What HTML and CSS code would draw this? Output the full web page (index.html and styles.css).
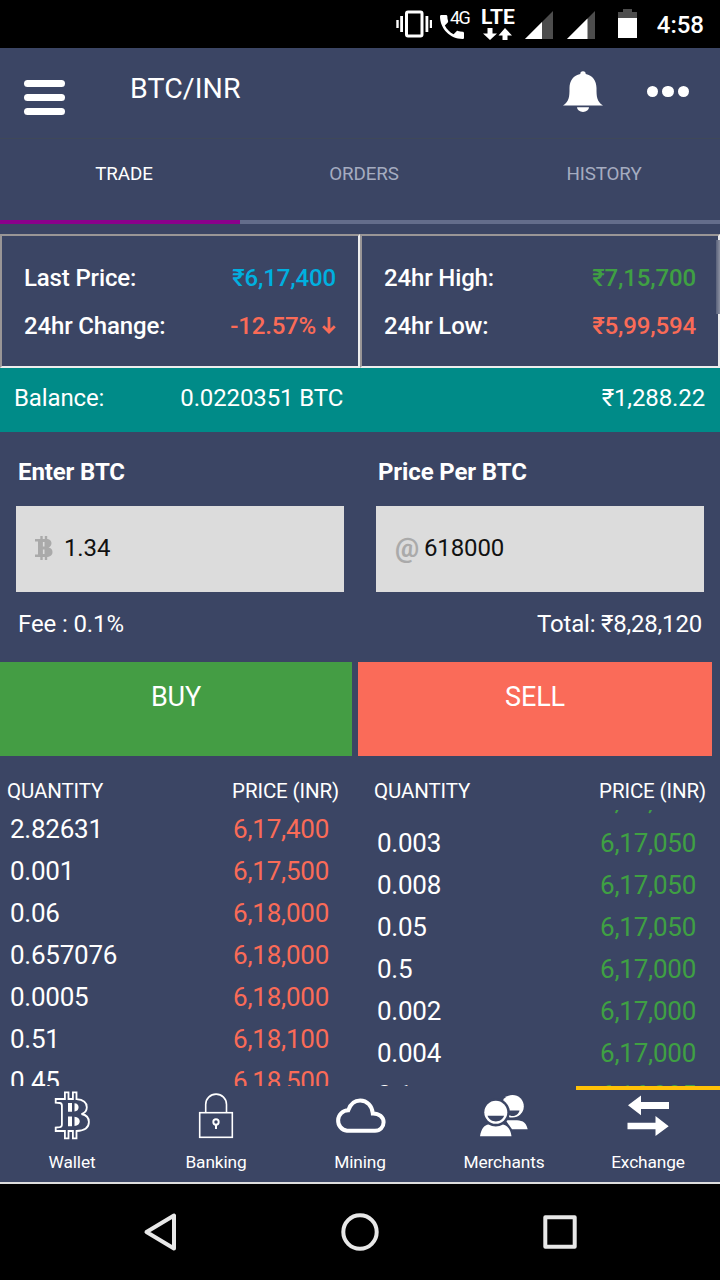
FILE: index.html
```html
<!DOCTYPE html>
<html lang="en">
<head>
    <meta charset="UTF-8">
    <meta name="viewport" content="width=device-width, initial-scale=1.0">
    <title>BTC/INR</title>
    <link rel="stylesheet" href="styles.css">
</head>
<body>
    <!-- Status bar -->
    <div class="status-bar">
        <svg class="vibrate" width="36" height="28" viewBox="0 0 36 28" fill="none" stroke="#fff">
            <rect x="10.5" y="2" width="15.5" height="24" rx="1.5" stroke-width="3"/>
            <path d="M5.6 6v16M30.9 6v16" stroke-width="2.8"/>
            <path d="M1.5 10v8M35 10v8" stroke-width="2.4"/>
        </svg>
        <div class="call">
            <svg width="24" height="24" viewBox="3 3 18 18" fill="#fff">
                <path d="M6.62 10.79c1.44 2.83 3.76 5.14 6.59 6.59l2.2-2.2c.27-.27.67-.36 1.02-.24 1.12.37 2.33.57 3.57.57.55 0 1 .45 1 1V20c0 .55-.45 1-1 1-9.39 0-17-7.61-17-17 0-.55.45-1 1-1h3.5c.55 0 1 .45 1 1 0 1.25.2 2.45.57 3.57.11.35.03.74-.25 1.02l-2.2 2.2z"/>
            </svg>
            <span class="call-type">4G</span>
        </div>
        <div class="lte">
            <span>LTE</span>
            <svg width="29" height="12" viewBox="0 0 29 12" fill="#fff">
                <path d="M4.500 0h5v5.500h4.500L7 12 0 5.500h4.500zM19.500 12h5V7.500h4.500L22 0l-6.500 7.500h4z"/>
            </svg>
        </div>
        <svg class="signal" width="28" height="28" viewBox="0 0 28 28">
            <path d="M0 28L28 0v28z" fill="#4d4d4d"/><path d="M0 28L17 11v17z" fill="#fff"/>
        </svg>
        <svg class="signal2" width="28" height="28" viewBox="0 0 28 28">
            <path d="M0 28L28 0v28z" fill="#4d4d4d"/><path d="M0 28L20.500 7.500V28z" fill="#fff"/>
        </svg>
        <svg class="battery" width="19" height="29" viewBox="0 0 19 29">
            <path d="M0 9V3h5V0h9v3h5v6z" fill="#4d4d4d"/><path d="M0 9h19v20H0z" fill="#fff"/>
        </svg>
        <span class="clock">4:58</span>
    </div>

    <!-- Header -->
    <div class="header">
        <div class="menu"><i></i><i></i><i></i></div>
        <h1>BTC/INR</h1>
        <svg class="bell" width="40" height="42" viewBox="0 0 40 42" fill="#fff">
            <path d="M17.300 2.900a2.700 2.700 0 0 1 5.400 0C29.500 4.100 33.500 9.500 33.500 17c0 9 .3 13.500 6.500 17.400H0C6.200 30.500 6.500 26 6.500 17c0-7.500 4-12.900 10.800-14.100z"/>
            <path d="M14 36.200h12a6 4.800 0 0 1-12 0z"/>
        </svg>
        <div class="more"><i></i><i></i><i></i></div>
    </div>

    <!-- Tabs -->
    <div class="tabs">
        <div class="tab active">TRADE</div>
        <div class="tab">ORDERS</div>
        <div class="tab">HISTORY</div>
    </div>

    <!-- Price stats -->
    <div class="stats">
        <div class="stat-box">
            <div class="stat"><span>Last Price:</span><span class="blue">₹6,17,400</span></div>
            <div class="stat"><span>24hr Change:</span>
                <span class="red change">-12.57%<svg width="14" height="18" viewBox="0 0 14 18" fill="none" stroke="#fa6b57" stroke-width="2.8"><path d="M7 0v15M1.200 9.300L7 15l5.800-5.700"/></svg></span>
            </div>
        </div>
        <div class="stat-box">
            <div class="stat"><span>24hr High:</span><span class="green">₹7,15,700</span></div>
            <div class="stat"><span>24hr Low:</span><span class="red">₹5,99,594</span></div>
        </div>
        <div class="scrollbar"></div>
    </div>

    <div class="balance">
        <span>Balance:</span>
        <span class="btc">0.0220351 BTC</span>
        <span class="inr">₹1,288.22</span>
    </div>

    <!-- Order form -->
    <div class="form">
        <div class="field">
            <label>Enter BTC</label>
            <div class="input">
                <svg class="input-icon" width="18" height="24" viewBox="0 0 18 24">
                    <path d="M6.500 0v24M11 0v24" stroke="#aaa" stroke-width="2.400"/>
                    <path d="M0 3h11c4 0 5.500 2 5.500 4.300S15 11 13.500 11.500c2.500.5 4 2 4 4.400 0 3.300-2.500 5.100-6.500 5.100H0v-2.500h3v-13H0z" fill="#aaa"/>
                    <path d="M8.700 6v4.500M8.700 13.500V18" stroke="#dcdcdc" stroke-width="1.600"/>
                </svg>
                <span>1.34</span>
            </div>
            <div class="note">Fee : 0.1%</div>
        </div>
        <div class="field">
            <label>Price Per BTC</label>
            <div class="input">
                <span class="input-icon at">@</span>
                <span>618000</span>
            </div>
            <div class="note right">Total: ₹8,28,120</div>
        </div>
    </div>

    <div class="buttons">
        <div class="btn buy">BUY</div>
        <div class="btn sell">SELL</div>
    </div>

    <!-- Order book -->
    <div class="book">
        <div class="book-col asks">
            <div class="book-head"><span>QUANTITY</span><span>PRICE (INR)</span></div>
            <div class="list">
                <div class="rows">
                    <div class="row"><span>2.82631</span><span class="red">6,17,400</span></div>
                    <div class="row"><span>0.001</span><span class="red">6,17,500</span></div>
                    <div class="row"><span>0.06</span><span class="red">6,18,000</span></div>
                    <div class="row"><span>0.657076</span><span class="red">6,18,000</span></div>
                    <div class="row"><span>0.0005</span><span class="red">6,18,000</span></div>
                    <div class="row"><span>0.51</span><span class="red">6,18,100</span></div>
                    <div class="row"><span>0.45</span><span class="red">6,18,500</span></div>
                </div>
            </div>
        </div>
        <div class="book-col bids">
            <div class="book-head"><span>QUANTITY</span><span>PRICE (INR)</span></div>
            <div class="list">
                <div class="rows">
                    <div class="row"><span>0.01</span><span class="green">6,17,100</span></div>
                    <div class="row"><span>0.003</span><span class="green">6,17,050</span></div>
                    <div class="row"><span>0.008</span><span class="green">6,17,050</span></div>
                    <div class="row"><span>0.05</span><span class="green">6,17,050</span></div>
                    <div class="row"><span>0.5</span><span class="green">6,17,000</span></div>
                    <div class="row"><span>0.002</span><span class="green">6,17,000</span></div>
                    <div class="row"><span>0.004</span><span class="green">6,17,000</span></div>
                    <div class="row"><span>0.1</span><span class="green">6,16,985</span></div>
                </div>
            </div>
        </div>
    </div>

    <!-- Bottom navigation -->
    <div class="nav">
        <div class="nav-item">
            <svg width="52" height="52" viewBox="0 0 52 52" fill="none" stroke="#fff" stroke-width="1.800">
                <path d="M18.900 9V2.400h3.600V9h4.400V2.400h3.600v6.700c7 .5 10.300 3.800 10.300 8.100 0 3.500-2 5.900-5.300 6.800 4.900.9 7.400 4 7.400 8 0 5.600-4.500 8.700-12.400 9v7.300h-3.600V41h-4.400v7.300h-3.600V41H9.700v-3.400l4-.4c1.600-.2 2.200-.9 2.200-2.500V15.500c0-1.700-.6-2.400-2.200-2.500l-4-.3V9z"/>
                <path d="M22 13h4v8.800h-4zM22 26.500h4v9.700h-4zM28.500 13.300c5.500 0 5.500 8.200 0 8.200zM28.500 26.800c7 0 7 9.200 0 9.200z" fill="#fff" stroke="none"/>
            </svg>
            <span>Wallet</span>
        </div>
        <div class="nav-item">
            <svg width="52" height="52" viewBox="0 0 52 52" fill="none" stroke="#fff" stroke-width="1.600">
                <rect x="9.700" y="22.700" width="32.600" height="24.600"/>
                <path d="M15.700 22.500V14.500a10.300 10.300 0 0 1 20.800 0v8"/>
                <circle cx="26" cy="32" r="2.700" stroke-width="1.900"/>
                <path d="M26 35v4" stroke-width="2"/>
            </svg>
            <span>Banking</span>
        </div>
        <div class="nav-item">
            <svg width="52" height="52" viewBox="0 0 52 52" fill="none" stroke="#fff" stroke-width="4">
                <path d="M13 40.800A10.300 10.300 0 0 1 14.200 20.300C16.300 14.300 20.800 10.500 26.200 10.500c6.800 0 12 5.500 12.600 12.900 6.400-.1 10.800 3.800 10.800 8.900 0 4.800-3.600 8.500-8.600 8.500z"/>
            </svg>
            <span>Mining</span>
        </div>
        <div class="nav-item">
            <svg width="52" height="52" viewBox="0 0 52 52">
                <circle cx="34.500" cy="16.300" r="11.300" fill="#fff"/>
                <path d="M28 20.500h13.500c-1 4-4 5.500-7 5.500-2.500 0-5-1.500-6.500-5.500z" fill="#3b4564"/>
                <path d="M27.500 30c10 1.500 19.500-3 22.200 9.300H34z" fill="#fff"/>
                <circle cx="17.800" cy="22.300" r="14" fill="#3b4564"/>
                <circle cx="17.800" cy="22.300" r="11.500" fill="#fff"/>
                <path d="M9.500 25.800h16.600c-1.500 4-4.800 5.700-8.300 5.700s-6.800-1.700-8.300-5.700z" fill="#3b4564"/>
                <path d="M2 46.200C3.500 38 6.500 35 10.500 34.500c4.500 2.500 10 2.500 14.500 0 4.500.8 7.500 4.500 8.500 11.700z" fill="#fff"/>
            </svg>
            <span>Merchants</span>
        </div>
        <div class="nav-item current">
            <svg width="52" height="52" viewBox="0 0 52 52" fill="#fff">
                <path d="M6 15.300L19 5.500v6.500h28v7H19v6.300zM46.700 36.200L33.500 26v6.700H5.500v6.600h28V46z"/>
            </svg>
            <span>Exchange</span>
        </div>
    </div>

    <!-- Android keys -->
    <div class="keys">
        <svg width="34" height="40" viewBox="0 0 34 40"><path d="M31 3.500v33L3.500 20z"/></svg>
        <svg width="40" height="40" viewBox="0 0 40 40"><circle cx="20" cy="20" r="16.700"/></svg>
        <svg width="34" height="40" viewBox="0 0 34 40"><rect x="2.300" y="5.300" width="29.400" height="29.400"/></svg>
    </div>
</body>
</html>
```
FILE: styles.css
```css
* {
    box-sizing: border-box;
}
body {
    margin: 0;
    width: 720px;
    height: 1280px;
    overflow: hidden;
    background-color: #3b4564;
    color: #fff;
    font-family: Roboto, sans-serif;
    font-size: 24px;
    letter-spacing: -0.12px;
    display: flex;
    flex-direction: column;
}
svg {
    display: block;
    flex: none;
}
.blue { color: #00b0e0; }
.red { color: #fa6b57; }
.green { color: #3fa043; }

/* Status bar */
.status-bar {
    height: 48px;
    background-color: #000;
    display: flex;
    align-items: flex-start;
    padding: 10px 16px 0 396px;
    flex: none;
}
.call {
    display: flex;
    align-items: flex-end;
    width: 32px;
    height: 29px;
    margin-left: 8px;
}
.call-type {
    font-size: 18px;
    line-height: 16px;
    letter-spacing: -1.5px;
    align-self: flex-start;
    margin-left: -14px;
}
.lte {
    width: 36px;
    margin-left: 8px;
    display: flex;
    flex-direction: column;
    align-items: center;
    font-size: 21px;
    font-weight: 700;
    letter-spacing: 0;
    line-height: 15px;
}
.lte svg {
    margin-top: 3px;
}
.signal { margin: 1px 0 0 9px; }
.signal2 { margin: 1px 0 0 14px; }
.battery { margin: -1px 0 0 23px; }
.clock {
    margin-left: 20px;
    line-height: 31px;
    font-weight: 500;
    letter-spacing: 0;
}

/* Header */
.header {
    height: 91px;
    flex: none;
    display: flex;
    align-items: flex-start;
    border-bottom: 1px solid #3f4859;
    padding-left: 24px;
}
.menu {
    width: 41px;
    margin-top: 32px;
    display: flex;
    flex-direction: column;
    gap: 6.500px;
}
.menu i {
    height: 7.400px;
    border-radius: 4px;
    background-color: #fff;
}
h1 {
    margin: 24px 0 0 65px;
    width: 433px;
    font-size: 28.500px;
    letter-spacing: 0.1px;
    line-height: 33px;
    font-weight: 400;
}
.bell {
    margin-top: 23px;
}
.more {
    display: flex;
    gap: 4px;
    margin: 38px 0 0 44px;
}
.more i {
    width: 11.400px;
    height: 11.400px;
    border-radius: 50%;
    background-color: #fff;
}

/* Tabs */
.tabs {
    display: flex;
    height: 85px;
    flex: none;
}
.tab {
    width: 240px;
    border-bottom: 4px solid #646d8b;
    padding: 24px 0 0 8px;
    line-height: 22px;
    text-align: center;
    font-size: 18.800px;
    color: #a5acc0;
}
.tab.active {
    color: #fff;
    border-color: #8b008b;
}

/* Stats */
.stats {
    display: flex;
    height: 134px;
    flex: none;
    margin-top: 10px;
    position: relative;
}
.stat-box {
    width: 360px;
    border: 2px solid;
    border-color: #9a9696 #eee #eee #9a9696;
    padding: 18px 22px;
    font-weight: 500;
}
.stat {
    display: flex;
    justify-content: space-between;
    line-height: 48px;
    letter-spacing: -0.15px;
}
.change {
    display: flex;
    align-items: center;
    gap: 6px;
    letter-spacing: -0.2px;
}
.scrollbar {
    position: absolute;
    right: 0;
    top: 6px;
    width: 4px;
    height: 74px;
    background: linear-gradient(to right, #59617a, #8c91a2);
}
.balance {
    height: 64px;
    flex: none;
    display: flex;
    padding: 0 15px 0 14px;
    line-height: 60px;
    background-color: #008b88;
}
.balance .btc {
    margin-left: 76px;
}
.balance .inr {
    margin-left: auto;
}

/* Form */
.form {
    display: flex;
    gap: 32px;
    padding: 0 16px;
    height: 230px;
    flex: none;
}
.field {
    width: 328px;
}
.field label {
    display: block;
    padding: 26px 0 0 2px;
    height: 74px;
    line-height: 28px;
    font-weight: 700;
}
.input {
    display: flex;
    align-items: center;
    height: 86px;
    padding: 0 0 2px 19px;
    background-color: #dcdcdc;
    color: #111;
}
.input-icon {
    margin-right: 11px;
}
.at {
    width: 25px;
    margin-right: 4px;
    color: #aaa;
    font-size: 27px;
    font-weight: 700;
}
.note {
    padding: 18px 2px 0;
    line-height: 28px;
}
.note.right {
    text-align: right;
    letter-spacing: -0.2px;
}
.buttons {
    display: flex;
    gap: 6px;
    height: 94px;
    flex: none;
}
.btn {
    width: 354px;
    text-align: center;
    font-size: 27px;
    line-height: 70px;
}
.buy {
    width: 352px;
    background-color: #449d44;
}
.sell {
    background-color: #fa6b59;
}

/* Order book */
.book {
    display: flex;
    height: 330px;
    flex: none;
}
.book-col {
    width: 353px;
    padding: 20px 14px 0 7px;
}
.bids {
    margin-left: 14px;
}
.book-head {
    display: flex;
    justify-content: space-between;
    height: 34px;
    line-height: 30px;
    font-size: 20.500px;
}
.list {
    height: 276px;
    overflow: hidden;
}
.asks .rows { margin-top: -2px; }
.bids .rows { margin-top: -30px; }
.row {
    display: flex;
    justify-content: space-between;
    height: 42px;
    line-height: 42px;
    font-size: 26px;
    letter-spacing: -0.25px;
    padding: 0 10px 0 3px;
}

/* Bottom nav */
.nav {
    display: flex;
    height: 98px;
    flex: none;
    border-bottom: 2px solid #ddd;
}
.nav-item {
    width: 144px;
    padding-top: 4px;
    display: flex;
    flex-direction: column;
    align-items: center;
    font-size: 17.300px;
    border-top: 0 solid #ffc107;
}
.nav-item span {
    line-height: 22px;
    margin-top: 9px;
}
.nav-item.current {
    border-top-width: 4px;
    padding-top: 0;
}
.keys {
    display: flex;
    justify-content: space-between;
    align-items: center;
    flex: 1;
    padding: 0 143px;
    background-color: #000;
}
.keys svg {
    fill: none;
    stroke: #e8e8e8;
    stroke-width: 4;
    stroke-linejoin: round;
}
```
